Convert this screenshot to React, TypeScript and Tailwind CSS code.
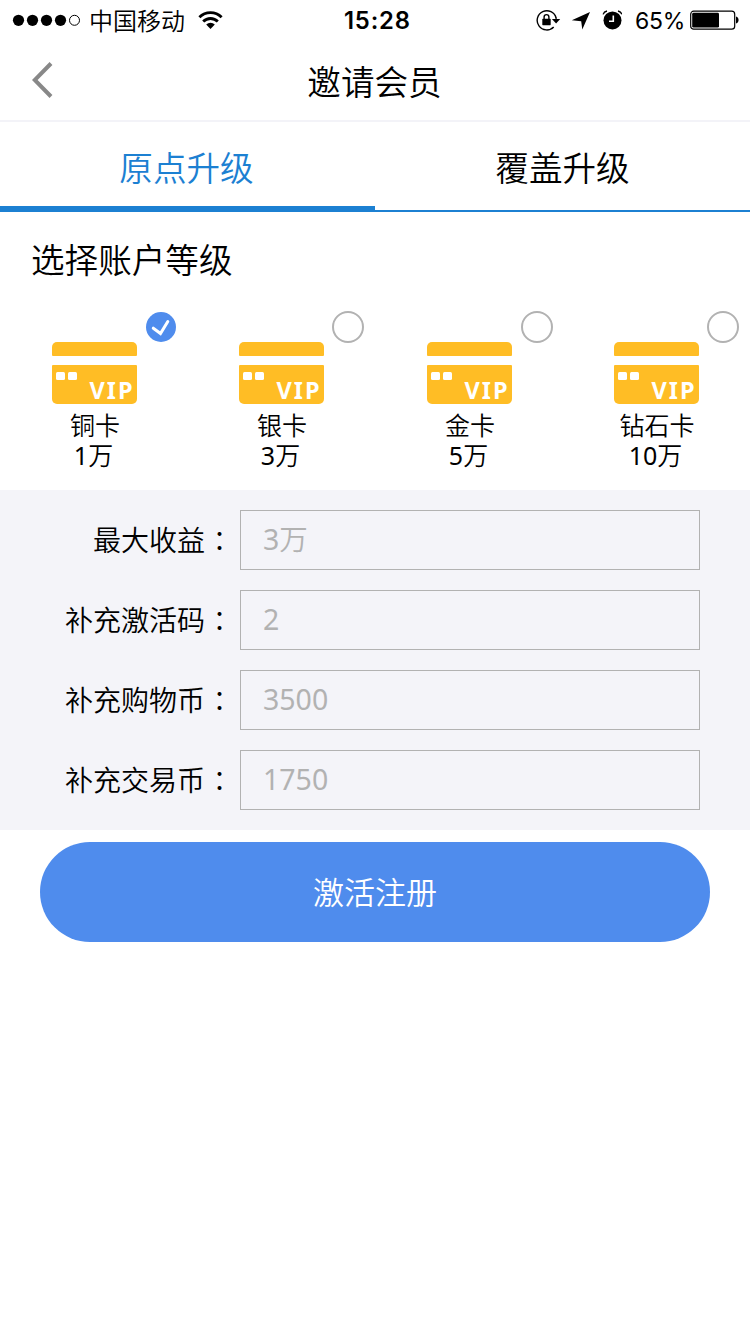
import React from "react";

type Level = { name: string; amount: string; selected?: boolean; spot: string };

const levels: Level[] = [
  { name: "铜卡", amount: "1", selected: true, spot: "left-[146px]" },
  { name: "银卡", amount: "3", spot: "left-[145px]" },
  { name: "金卡", amount: "5", spot: "left-[146px]" },
  { name: "钻石卡", amount: "10", spot: "left-[145px]" },
];

const fields = [
  { label: "最大收益", value: "3", unit: "万" },
  { label: "补充激活码", value: "2" },
  { label: "补充购物币", value: "3500" },
  { label: "补充交易币", value: "1750" },
];

function StatusBar() {
  return (
    <div className="flex h-10 items-center text-black">
      <svg width="70" height="12" viewBox="0 0 70 12" className="ml-3 shrink-0">
        {[6.5, 20.5, 34.5, 48.5].map((x) => (
          <circle key={x} cx={x} cy="6.3" r="5.6" />
        ))}
        <circle cx="62.5" cy="6.3" r="5" fill="none" stroke="#000" strokeWidth="1" />
      </svg>
      <span className="ml-[7px] w-24 pt-px text-[24px] leading-10 whitespace-nowrap">中国移动</span>
      <svg width="26" height="20" viewBox="0 0 26 20" className="ml-[13px] shrink-0" fill="none" stroke="#000" strokeWidth="2.8">
        <path d="M1.4 7.2a15.6 15.6 0 0 1 22.2 0" />
        <path d="M5.2 11.6a10.2 10.2 0 0 1 14.6 0" />
        <path d="M12.5 19l-4.3-4.4a6 6 0 0 1 8.6 0z" fill="#000" stroke="none" />
      </svg>
      <span className="ml-[120px] w-[68px] pt-[2px] font-['Inter',sans-serif] text-[23.8px] font-semibold leading-10 tracking-[0.8px]">15:28</span>
      <svg width="25" height="22" viewBox="0 0 25 22" className="ml-[124px] shrink-0">
        <path d="M20.1 9A9.6 9.6 0 1 0 17.7 18" fill="none" stroke="#000" strokeWidth="1.4" />
        <path d="M20.1 8.5v3" stroke="#000" strokeWidth="1.3" />
        <path d="M15.9 10h8.3l-4.1 4.4z" />
        <rect x="6.3" y="9.8" width="8.4" height="6.4" rx="0.6" />
        <path d="M8.1 10V8a2.4 2.4 0 0 1 4.8 0v2" fill="none" stroke="#000" strokeWidth="1.4" />
      </svg>
      <svg width="20" height="20" viewBox="0 0 20 20" className="ml-[10px] shrink-0">
        <path d="M19 2 11.3 19.5 10.2 11.2 .8 10.3z" />
      </svg>
      <svg width="20" height="20" viewBox="0 0 20 20" className="ml-[11px] shrink-0">
        <circle cx="10.5" cy="10.4" r="9" />
        <path d="M1.1 4.4Q2 1.7 5 1M19.9 4.4Q19 1.7 16 1" fill="none" stroke="#000" strokeWidth="1.4" />
        <path d="M11.3 5.5v5.7H7" fill="none" stroke="#fff" strokeWidth="1.6" />
      </svg>
      <span className="ml-[13px] w-[52px] pt-px font-['Inter',sans-serif] text-[23px] font-normal leading-10 tracking-[-0.2px]">65%</span>
      <svg width="50" height="20" viewBox="0 0 50 20" className="ml-[3px] shrink-0">
        <rect x="0.7" y="1.2" width="44" height="18" rx="3" fill="none" stroke="#000" strokeWidth="1.2" />
        <rect x="2.2" y="2.8" width="26.8" height="14.8" rx="1.4" />
        <path d="M46 6.6c3.4.8 3.4 6.2 0 7z" />
      </svg>
    </div>
  );
}

function Card() {
  return (
    <div className="ml-[52px] flex h-[62px] w-[85px] flex-col justify-between">
      <div className="h-[14px] rounded-t-[5px] rounded-b-[1px] bg-[#ffbd25]" />
      <div className="flex h-[39px] rounded-t-[1px] rounded-b-[5px] bg-[#ffbd25]">
        <div className="mt-[7px] ml-[4px] flex gap-[3px]">
          <i className="block h-[8px] w-[9px] rounded-[1.5px] bg-white" />
          <i className="block h-[8px] w-[9px] rounded-[1.5px] bg-white" />
        </div>
        <span className="mt-[13px] ml-[12.5px] font-['Noto_Sans',sans-serif] text-[23.5px] font-bold leading-6 tracking-[2px] text-white">
          VIP
        </span>
      </div>
    </div>
  );
}

export default function App() {
  return (
    <main
      lang="zh-CN"
      className="h-[1334px] w-[750px] overflow-hidden bg-white font-['Noto_Sans','Noto_Sans_CJK_SC',sans-serif] font-[350] text-black"
    >
      <StatusBar />
      <header className="grid h-[82px] grid-cols-[100px_1fr_100px] items-center border-b-2 border-[#f3f3f8]">
        <svg width="24" height="36" viewBox="0 0 24 36" className="ml-8" fill="none" stroke="#888" strokeWidth="4">
          <path d="M19 1.5 2.7 18 19 34.5" />
        </svg>
        <h1 className="pt-[4px] pr-px text-center text-[33.6px] leading-[50px]">邀请会员</h1>
      </header>
      <nav className="grid h-[90px] grid-cols-2 text-center text-[33.6px]">
        <a className="border-b-[6px] border-[#1c80d2] pt-[21px] pr-[2px] leading-[50px] text-[#1c80d2]">原点升级</a>
        <a className="border-b-2 border-[#1c80d2] pt-[21px] leading-[50px]">覆盖升级</a>
      </nav>
      <section className="h-[278px]">
        <h2 className="pt-[23px] pl-[31px] text-[33.6px] leading-[50px]">选择账户等级</h2>
        <div className="mt-[26px] grid grid-cols-[187px_188px_187px_188px]">
          {levels.map((l) => (
            <div key={l.name} className="relative pt-[31px]">
              <Card />
              {l.selected ? (
                <svg width="30" height="30" viewBox="0 0 30 30" className="absolute top-px left-[146px]">
                  <circle cx="15" cy="15" r="15" fill="#4f8ced" />
                  <path d="M7.3 16.2l7.2 5.3L21.8 9.5" fill="none" stroke="#fff" strokeWidth="3" strokeLinecap="round" />
                </svg>
              ) : (
                <span className={`absolute top-0 size-8 rounded-full border-2 border-[#b2b2b2] ${l.spot}`} />
              )}
              <div className="w-[190px] pt-[5px] text-center font-['Noto_Sans_CJK_SC',sans-serif] text-[25px] leading-[30px]">{l.name}</div>
              <div className="w-[187px] pt-px text-center text-[25px] leading-[30px]">
                <span className="font-normal">{l.amount}</span>万
              </div>
            </div>
          ))}
        </div>
      </section>
      <section className="flex h-[340px] flex-col gap-5 bg-[#f4f4f9] pt-5">
        {fields.map((f) => (
          <label key={f.label} className="flex h-[60px]">
            <span className="w-[205px] text-right text-[28px] leading-[60px]">{f.label}</span>
            <span lang="zh-TW" className="w-7 pl-px font-['Noto_Sans_CJK_TC',sans-serif] text-[27px] leading-[60px]">：</span>
            <span className="ml-[7px] w-[460px] border border-[#b2b2b2] pl-[22px] text-[28.5px] leading-[56px] text-[#b2b2b2]">
              <span className="font-normal">{f.value}</span>
              {f.unit}
            </span>
          </label>
        ))}
      </section>
      <button className="mt-3 ml-10 block h-[100px] w-[670px] rounded-full bg-[#4f8ced] text-[31px] leading-[99px] text-white">
        激活注册
      </button>
    </main>
  );
}
